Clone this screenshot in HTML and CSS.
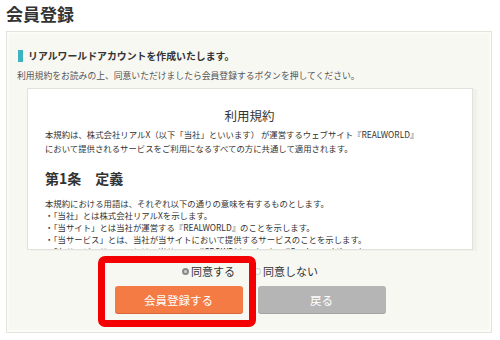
FILE: index.html
```html
<!DOCTYPE html>
<html lang="ja">
<head>
<meta charset="utf-8">
<title>会員登録</title>
<link rel="stylesheet" href="styles.css">
</head>
<body>
<h1 class="page-title">会員登録</h1>
<section class="panel">
  <h2 class="lead"><span class="lead-bar"></span>リアルワールドアカウントを作成いたします。</h2>
  <p class="note">利用規約をお読みの上、同意いただけましたら会員登録するボタンを押してください。</p>
  <div class="terms">
    <h3 class="terms-title">利用規約</h3>
    <p class="terms-intro">本規約は、株式会社リアルX（以下「当社」といいます） が運営するウェブサイト『REALWORLD』<br>において提供されるサービスをご利用になるすべての方に共通して適用されます。</p>
    <h4 class="article">第1条　定義</h4>
    <p class="terms-body">本規約における用語は、それぞれ以下の通りの意味を有するものとします。<br>・「当社」とは株式会社リアルXを示します。<br>・「当サイト」とは当社が運営する『REALWORLD』のことを示します。<br>・「当サービス」とは、当社が当サイトにおいて提供するサービスのことを示します。<br>・「各サービスサイト」とは、当サイト、『CROWD(クラウド)』、『Gardeme（ガレモ）』、</p>
  </div>
  <div class="choices">
    <label class="choice"><span class="radio radio-on"></span>同意する</label>
    <label class="choice"><span class="radio"></span>同意しない</label>
  </div>
  <div class="actions">
    <button class="btn btn-primary">会員登録する</button>
    <button class="btn btn-back">戻る</button>
  </div>
</section>
<div class="highlight"></div>
</body>
</html>
```
FILE: styles.css
```css
html, body {
  margin: 0;
  background: #fff;
}
body {
  position: relative;
  padding: 4px 6px 0;
  width: 500px;
  height: 340px;
  box-sizing: border-box;
  font-family: "Noto Sans CJK JP", "Noto Sans", sans-serif;
  color: #333;
  overflow: hidden;
}
.page-title {
  margin: 0;
  font-size: 17px;
  line-height: 20px;
  font-weight: bold;
  color: #333;
}
.panel {
  margin-top: 7px;
  width: 486px;
  height: 302px;
  box-sizing: border-box;
  background: #f8f8f3;
  border: 1px solid #e4e4dc;
  box-shadow: inset 0 0 0 2px #fbfbf8;
  padding: 17px 11px 0;
}
.lead {
  display: flex;
  align-items: center;
  margin: 0;
  font-size: 9.9px;
  line-height: 14px;
  font-weight: bold;
  color: #333;
}
.lead-bar {
  width: 5px;
  height: 12px;
  background: #3db3c1;
  margin-right: 5px;
}
.note {
  margin: 7px 0 0 -1px;
  font-size: 8.8px;
  line-height: 12px;
  color: #555;
}
.terms {
  margin: 6px 0 0 9px;
  width: 446px;
  height: 162px;
  box-sizing: border-box;
  background: #fff;
  border: 1px solid #e2e2dc;
  box-shadow: 4px 1px 0 #f1f1ec;
  padding: 0 18px 0 17px;
  overflow: hidden;
}
.terms-title {
  margin: 18px 0 0;
  text-align: center;
  font-size: 12.5px;
  line-height: 18px;
  font-weight: normal;
  color: #333;
}
.terms-intro {
  margin: 2px 0 0;
  font-size: 8.4px;
  line-height: 14px;
  white-space: nowrap;
}
.article {
  margin: 13px 0 0;
  font-size: 14px;
  line-height: 20px;
  font-weight: bold;
}
.terms-body {
  margin: 9px 0 0;
  font-size: 8.4px;
  line-height: 12px;
  white-space: nowrap;
}
.choices {
  display: flex;
  justify-content: center;
  gap: 19px;
  margin: 14px 0 0;
  padding-left: 2px;
  font-size: 11px;
  line-height: 14px;
  color: #333;
}
.choice {
  display: flex;
  align-items: center;
}
.radio {
  width: 7px;
  height: 7px;
  box-sizing: border-box;
  border-radius: 50%;
  border: 1px solid #c8c8c8;
  background: #fff;
  margin-right: 2px;
}
.radio-on {
  border: 2px solid #8a8a8a;
  background: #d0d0d0;
}
.actions {
  display: flex;
  justify-content: center;
  gap: 15px;
  margin-top: 8px;
  padding-left: 2px;
}
.btn {
  width: 128px;
  height: 27px;
  border: 0;
  border-radius: 3px;
  font-family: "Noto Sans CJK JP", "Noto Sans", sans-serif;
  font-size: 11.5px;
  color: #fff;
  padding: 0;
}
.btn-primary {
  background: #f57b44;
  box-shadow: 0 1px 0 #d8653a;
}
.btn-back {
  background: #b5b5b5;
  box-shadow: 0 1px 0 #a3a3a3;
}
.highlight {
  position: absolute;
  left: 98px;
  top: 256px;
  width: 158px;
  height: 71px;
  box-sizing: border-box;
  border: 7px solid #f40000;
  border-radius: 7px;
}
```
